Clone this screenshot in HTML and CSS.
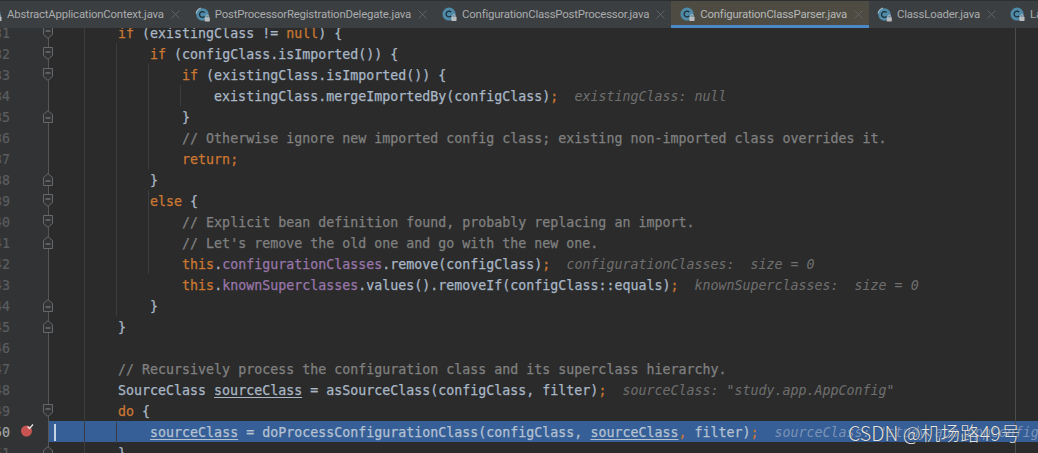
FILE: index.html
```
<!DOCTYPE html>
<html lang="en">
<head>
<meta charset="utf-8">
<title>ConfigurationClassParser.java</title>
<link rel="stylesheet" href="styles.css">
</head>
<body>
<svg class="defs" width="0" height="0" aria-hidden="true">
  <symbol id="cls" viewBox="0 0 16 16">
    <circle cx="7.500" cy="7.500" r="7" fill="#4f8aa8"/>
    <path d="M9.800 5.400A3.100 3.100 0 1 0 9.800 9.600" fill="none" stroke="#1f2f38" stroke-width="1.400"/>
    <rect x="10" y="10.500" width="5.500" height="4.500" rx=".5" fill="#b9bcbe"/>
    <path d="M11.300 10.500V9.400a1.400 1.400 0 0 1 2.800 0v1.100" fill="none" stroke="#b9bcbe"/>
  </symbol>
  <symbol id="cls-pin" viewBox="0 0 16 16">
    <circle cx="8" cy="8" r="6.600" fill="#4f8aa8"/>
    <path d="M6.200 1.200A7.400 7.400 0 0 0 1.200 7" fill="none" stroke="#9db9c7" stroke-width="1.200"/>
    <path d="M10.200 5.900A3.100 3.100 0 1 0 10.200 10.100" fill="none" stroke="#1f2f38" stroke-width="1.400"/>
    <rect x="10.400" y="11" width="5.400" height="4.500" rx=".5" fill="#b9bcbe"/>
    <path d="M11.700 11V9.900a1.400 1.400 0 0 1 2.800 0V11" fill="none" stroke="#b9bcbe"/>
  </symbol>
  <symbol id="close" viewBox="0 0 9 9">
    <path d="M.5.500l8 8M8.500.5l-8 8" fill="none" stroke="#5f6264"/>
  </symbol>
  <symbol id="fold-open" viewBox="0 0 10 13">
    <path d="M.5.500h9v8L5 12.400.5 8.500z" fill="#313335" stroke="#66686a"/>
    <path d="M2.500 5h5" stroke="#8a8c8e"/>
  </symbol>
  <symbol id="fold-close" viewBox="0 0 10 13">
    <path d="M.5 12.500V4.500L5 .6l4.500 3.900v8z" fill="#313335" stroke="#66686a"/>
    <path d="M2.500 8h5" stroke="#8a8c8e"/>
  </symbol>
</svg>

<div class="ide">
  <nav class="tabs">
    <div class="tab tab-first"><svg class="ico"><use href="#cls"/></svg><span class="name">AbstractApplicationContext.java</span><svg class="x"><use href="#close"/></svg></div>
    <div class="tab"><svg class="ico"><use href="#cls-pin"/></svg><span class="name">PostProcessorRegistrationDelegate.java</span><svg class="x"><use href="#close"/></svg></div>
    <div class="tab"><svg class="ico"><use href="#cls"/></svg><span class="name">ConfigurationClassPostProcessor.java</span><svg class="x"><use href="#close"/></svg></div>
    <div class="tab active"><svg class="ico"><use href="#cls"/></svg><span class="name">ConfigurationClassParser.java</span><svg class="x"><use href="#close"/></svg></div>
    <div class="tab tab-tight"><svg class="ico"><use href="#cls-pin"/></svg><span class="name">ClassLoader.java</span><svg class="x"><use href="#close"/></svg></div>
    <div class="tab"><svg class="ico"><use href="#cls"/></svg><span class="name">LaunchedURLClassLoader.java</span></div>
  </nav>

  <main class="editor">
    <div class="rows">
      <div class="row"><span class="num">231</span><span class="gut"><svg class="fold"><use href="#fold-open"/></svg></span><code class="code">        <b>if</b> (existingClass != <b>null</b>) {</code></div>
      <div class="row"><span class="num">232</span><span class="gut"><svg class="fold"><use href="#fold-open"/></svg></span><code class="code">            <b>if</b> (configClass.isImported()) {</code></div>
      <div class="row"><span class="num">233</span><span class="gut"><svg class="fold"><use href="#fold-open"/></svg></span><code class="code">                <b>if</b> (existingClass.isImported()) {</code></div>
      <div class="row"><span class="num">234</span><span class="gut"></span><code class="code">                    existingClass.mergeImportedBy(configClass)<b>;</b>  <i>existingClass: null</i></code></div>
      <div class="row"><span class="num">235</span><span class="gut"><svg class="fold"><use href="#fold-close"/></svg></span><code class="code">                }</code></div>
      <div class="row"><span class="num">236</span><span class="gut"></span><code class="code">                <em>// Otherwise ignore new imported config class; existing non-imported class overrides it.</em></code></div>
      <div class="row"><span class="num">237</span><span class="gut"></span><code class="code">                <b>return;</b></code></div>
      <div class="row"><span class="num">238</span><span class="gut"><svg class="fold"><use href="#fold-close"/></svg></span><code class="code">            }</code></div>
      <div class="row"><span class="num">239</span><span class="gut"><svg class="fold"><use href="#fold-open"/></svg></span><code class="code">            <b>else</b> {</code></div>
      <div class="row"><span class="num">240</span><span class="gut"><svg class="fold"><use href="#fold-open"/></svg></span><code class="code">                <em>// Explicit bean definition found, probably replacing an import.</em></code></div>
      <div class="row"><span class="num">241</span><span class="gut"><svg class="fold"><use href="#fold-close"/></svg></span><code class="code">                <em>// Let's remove the old one and go with the new one.</em></code></div>
      <div class="row"><span class="num">242</span><span class="gut"></span><code class="code">                <b>this</b>.<s>configurationClasses</s>.remove(configClass)<b>;</b>  <i>configurationClasses:  size = 0</i></code></div>
      <div class="row"><span class="num">243</span><span class="gut"></span><code class="code">                <b>this</b>.<s>knownSuperclasses</s>.values().removeIf(configClass::equals)<b>;</b>  <i>knownSuperclasses:  size = 0</i></code></div>
      <div class="row"><span class="num">244</span><span class="gut"><svg class="fold"><use href="#fold-close"/></svg></span><code class="code">            }</code></div>
      <div class="row"><span class="num">245</span><span class="gut"><svg class="fold"><use href="#fold-close"/></svg></span><code class="code">        }</code></div>
      <div class="row"><span class="num">246</span><span class="gut"></span><code class="code"> </code></div>
      <div class="row"><span class="num">247</span><span class="gut"></span><code class="code">        <em>// Recursively process the configuration class and its superclass hierarchy.</em></code></div>
      <div class="row"><span class="num">248</span><span class="gut"></span><code class="code">        SourceClass <u>sourceClass</u> = asSourceClass(configClass, filter)<b>;</b>  <i>sourceClass: "study.app.AppConfig"</i></code></div>
      <div class="row"><span class="num">249</span><span class="gut"><svg class="fold"><use href="#fold-open"/></svg></span><code class="code">        <b>do</b> {</code></div>
      <div class="row current"><span class="num">250</span><span class="gut"><svg class="bp" viewBox="0 0 14 14"><circle cx="6.500" cy="8" r="5.500" fill="#c75450"/><path d="M7.500 3.500l2 2 3.500-4" fill="none" stroke="#e8e8e8" stroke-width="1.200"/></svg></span><code class="code">            <u>sourceClass</u> = doProcessConfigurationClass(configClass, <u>sourceClass</u><b>,</b> filter)<b>;</b>  <i>sourceClass: "study.app.AppConfig"</i></code></div>
      <div class="row"><span class="num">251</span><span class="gut"><svg class="fold"><use href="#fold-close"/></svg></span><code class="code">        }</code></div>
    </div>
    <span class="guide g-a"></span>
    <span class="guide g-b"></span>
    <span class="guide g-c"></span>
    <span class="guide g-d"></span>
    <span class="guide g-e"></span>
    <span class="guide g-f"></span>
    <span class="guide g-g"></span>
    <span class="margin-line"></span>
    <span class="caret"></span>
    <span class="watermark">CSDN @机场路49号</span>
  </main>
</div>
</body>
</html>
```
FILE: styles.css
```
* { box-sizing: border-box; }
html, body { margin: 0; padding: 0; height: 100%; overflow: hidden; background: #2b2b2b; }
.defs { position: absolute; }
.ide { display: flex; flex-direction: column; height: 453px; width: 1038px; overflow: hidden; }

.tabs {
  flex: 0 0 28px;
  display: flex;
  background: #3c3f41;
  border-top: 1px solid #2d2f30;
  overflow: hidden;
  font: 11.4px/24px "Roboto", "Liberation Sans", sans-serif;
  letter-spacing: -.2px;
  color: #a9abad;
}
.tab {
  flex: none;
  display: flex;
  align-items: center;
  height: 27px;
  padding: 2px 6px 0 9px;
  border-bottom: 3px solid transparent;
}
.tab-first { margin-left: -22px; }
.tab-tight { padding-left: 8px; padding-right: 5px; }
.tab.active { background: #4e4c42; border-bottom-color: #4a88c7; color: #b5b7b8; }
.ico { width: 15px; height: 15px; flex: none; margin-right: 5px; }
.name { white-space: nowrap; }
.x { width: 9px; height: 9px; flex: none; margin-left: 7px; }

.editor {
  flex: 1;
  position: relative;
  overflow: hidden;
  background: linear-gradient(to right, #313335 48px, #2b2b2b 48px);
}
.rows { margin-top: -6px; }
.row { display: flex; height: 21px; align-items: center; }
.num {
  flex: none;
  width: 28px;
  margin-left: -14px;
  font: 13.3px/23px "DejaVu Sans Mono", monospace;
  height: 21px;
  color: #5b5e60;
  -webkit-text-stroke: .2px;
}
.gut {
  flex: none;
  width: 40px;
  height: 21px;
  display: flex;
  align-items: center;
  justify-content: flex-end;
  position: relative;
}
.fold { width: 10px; height: 13px; margin-right: 1px; position: relative; z-index: 2; }
.bp { width: 14px; height: 14px; position: absolute; left: 6px; top: 2px; }
.code {
  flex: 1;
  height: 21px;
  white-space: pre;
  font: 13.3px/23px "DejaVu Sans Mono", monospace;
  color: #a9b7c6;
  -webkit-text-stroke: .25px;
}
.code b { font-weight: normal; color: #cc7832; }
.code i { color: #6f6f6f; -webkit-text-stroke: 0; }
.code em { font-style: normal; color: #808080; }
.code s { text-decoration: none; color: #9876aa; }
.code u { text-underline-offset: 2px; }

.current { position: relative; }
.current .num { color: #a4a6a8; }
.current .code { background: #365e97; color: #b4c2d2; margin-left: -6px; padding-left: 6px; }
.current .code i { color: #7b93b6; }

.guide { position: absolute; width: 1px; background: #3b3c3d; }
.g-a { left: 84px; top: 0; bottom: 0; }
.g-b { left: 116px; top: 15px; height: 273px; }
.g-c { left: 116px; top: 394px; height: 21px; }
.g-d { left: 148px; top: 36px; height: 105px; }
.g-e { left: 148px; top: 162px; height: 84px; }
.g-f { left: 180px; top: 57px; height: 21px; }
.g-g { left: 48px; top: 0; bottom: 0; background: #55575a; }
.margin-line { position: absolute; left: 1015px; top: 0; bottom: 0; width: 1px; background: #4b4c4d; }
.caret { position: absolute; left: 54px; top: 396px; width: 2px; height: 17px; background: #c6d4e6; }

.watermark {
  position: absolute;
  left: 848px;
  top: 393px;
  font: 19.7px/24px "Noto Sans CJK SC", "Liberation Sans", sans-serif;
  font-weight: 300;
  color: #e4e6e8;
  text-shadow: 0 0 1px #20262e;
  white-space: nowrap;
}
```
